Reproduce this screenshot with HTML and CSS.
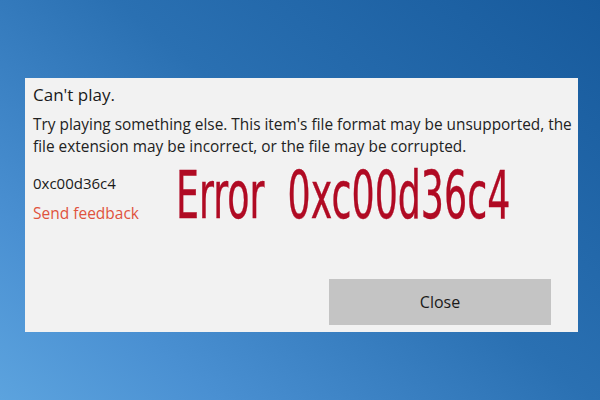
FILE: index.html
```html
<!DOCTYPE html>
<html>
<head>
<meta charset="utf-8">
<link rel="stylesheet" href="styles.css">
</head>
<body>
<div class="dialog">
  <div class="title">Can't play.</div>
  <div class="msg">Try playing something else. This item's file format may be unsupported, the file extension may be incorrect, or the file may be corrupted.</div>
  <div class="row">
    <div class="left">
      <div class="code">0xc00d36c4</div>
      <div class="feedback">Send feedback</div>
    </div>
    <div class="big">Error&nbsp; 0xc00d36c4</div>
  </div>
  <div class="actions">
    <div class="btn">Close</div>
  </div>
</div>
</body>
</html>
```
FILE: styles.css
```css
html, body { margin: 0; padding: 0; }
body {
  width: 600px;
  height: 400px;
  overflow: hidden;
  background: linear-gradient(220deg, #175a9c 0%, #2a70b2 45%, #4a90d2 80%, #5ca3de 100%);
  font-family: "Open Sans", "Noto Sans", sans-serif;
}
.dialog {
  margin: 78px 0 0 25px;
  width: 553px;
  height: 254px;
  box-sizing: border-box;
  background: #f2f2f2;
  padding: 5px 2px 0 8px;
  display: flex;
  flex-direction: column;
}
.title {
  font-size: 17px;
  color: #1a1a1a;
  line-height: 24px;
}
.msg {
  margin-top: 7px;
  font-size: 15.4px;
  line-height: 22px;
  color: #222;
}
.row {
  display: flex;
  align-items: flex-start;
  margin-top: 15px;
}
.left { flex: none; width: 143px; }
.code {
  font-size: 15px;
  line-height: 20px;
  color: #1a1a1a;
}
.feedback {
  margin-top: 9px;
  font-size: 15.5px;
  line-height: 22px;
  color: #e0523d;
}
.big {
  flex: none;
  font-family: "Liberation Sans Narrow", "DejaVu Sans Condensed", sans-serif;
  font-size: 65px;
  line-height: 64px;
  color: #b00a23;
  margin-top: -9px;
  transform: scaleX(0.622);
  transform-origin: left top;
  white-space: nowrap;
  -webkit-text-stroke: 0.4px #b00a23;
}
.actions {
  margin-top: auto;
  display: flex;
  justify-content: flex-end;
  padding: 0 25px 7px 0;
}
.btn {
  width: 222px;
  height: 46px;
  background: #c4c4c4;
  display: flex;
  align-items: center;
  justify-content: center;
  font-size: 16px;
  color: #1a1a1a;
}
```
